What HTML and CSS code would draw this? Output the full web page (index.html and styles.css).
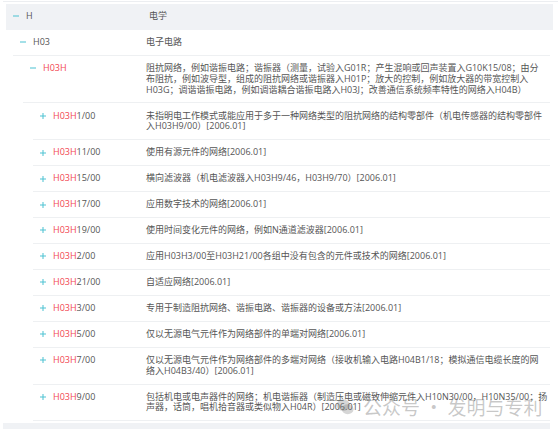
FILE: index.html
```html
<!DOCTYPE html>
<html lang="zh-CN">
<head>
<meta charset="utf-8">
<title>IPC H03H</title>
<link rel="stylesheet" href="styles.css">
</head>
<body>
<div class="tree">
  <div class="topline"></div>
  <div class="node">
    <div class="row head">
      <div class="code"><svg class="tog" viewBox="0 0 7 7"><path d="M0 3.5H7"/></svg><span>H</span></div>
      <div class="desc">电学</div>
    </div>
    <div class="children">
      <div class="node">
        <div class="row">
          <div class="code"><svg class="tog" viewBox="0 0 7 7"><path d="M0 3.5H7"/></svg><span>H03</span></div>
          <div class="desc">电子电路</div>
        </div>
        <div class="children">
          <div class="node">
            <div class="row">
              <div class="code"><svg class="tog" viewBox="0 0 7 7"><path d="M0 3.5H7"/></svg><span class="red">H03H</span></div>
              <div class="desc">阻抗网络，例如谐振电路；谐振器（测量，试验入G01R；产生混响或回声装置入G10K15/08；由分<br>布阻抗，例如波导型，组成的阻抗网络或谐振器入H01P；放大的控制，例如放大器的带宽控制入<br>H03G；调谐谐振电路，例如调谐耦合谐振电路入H03J；改善通信系统频率特性的网络入H04B）</div>
            </div>
            <div class="children">
              <div class="row">
                <div class="code"><svg class="tog" viewBox="0 0 7 7"><path d="M0 3.5H7M3.5 0V7"/></svg><span><b class="red">H03H</b>1/00</span></div>
                <div class="desc">未指明电工作模式或能应用于多于一种网络类型的阻抗网络的结构零部件（机电传感器的结构零部件<br>入H03H9/00）[2006.01]</div>
              </div>
              <div class="row">
                <div class="code"><svg class="tog" viewBox="0 0 7 7"><path d="M0 3.5H7M3.5 0V7"/></svg><span><b class="red">H03H</b>11/00</span></div>
                <div class="desc">使用有源元件的网络[2006.01]</div>
              </div>
              <div class="row">
                <div class="code"><svg class="tog" viewBox="0 0 7 7"><path d="M0 3.5H7M3.5 0V7"/></svg><span><b class="red">H03H</b>15/00</span></div>
                <div class="desc">横向滤波器（机电滤波器入H03H9/46，H03H9/70）[2006.01]</div>
              </div>
              <div class="row">
                <div class="code"><svg class="tog" viewBox="0 0 7 7"><path d="M0 3.5H7M3.5 0V7"/></svg><span><b class="red">H03H</b>17/00</span></div>
                <div class="desc">应用数字技术的网络[2006.01]</div>
              </div>
              <div class="row">
                <div class="code"><svg class="tog" viewBox="0 0 7 7"><path d="M0 3.5H7M3.5 0V7"/></svg><span><b class="red">H03H</b>19/00</span></div>
                <div class="desc">使用时间变化元件的网络，例如N通道滤波器[2006.01]</div>
              </div>
              <div class="row">
                <div class="code"><svg class="tog" viewBox="0 0 7 7"><path d="M0 3.5H7M3.5 0V7"/></svg><span><b class="red">H03H</b>2/00</span></div>
                <div class="desc">应用H03H3/00至H03H21/00各组中没有包含的元件或技术的网络[2006.01]</div>
              </div>
              <div class="row">
                <div class="code"><svg class="tog" viewBox="0 0 7 7"><path d="M0 3.5H7M3.5 0V7"/></svg><span><b class="red">H03H</b>21/00</span></div>
                <div class="desc">自适应网络[2006.01]</div>
              </div>
              <div class="row">
                <div class="code"><svg class="tog" viewBox="0 0 7 7"><path d="M0 3.5H7M3.5 0V7"/></svg><span><b class="red">H03H</b>3/00</span></div>
                <div class="desc">专用于制造阻抗网络、谐振电路、谐振器的设备或方法[2006.01]</div>
              </div>
              <div class="row">
                <div class="code"><svg class="tog" viewBox="0 0 7 7"><path d="M0 3.5H7M3.5 0V7"/></svg><span><b class="red">H03H</b>5/00</span></div>
                <div class="desc">仅以无源电气元件作为网络部件的单端对网络[2006.01]</div>
              </div>
              <div class="row">
                <div class="code"><svg class="tog" viewBox="0 0 7 7"><path d="M0 3.5H7M3.5 0V7"/></svg><span><b class="red">H03H</b>7/00</span></div>
                <div class="desc">仅以无源电气元件作为网络部件的多端对网络（接收机输入电路H04B1/18；模拟通信电缆长度的网<br>络入H04B3/40）[2006.01]</div>
              </div>
              <div class="row">
                <div class="code"><svg class="tog" viewBox="0 0 7 7"><path d="M0 3.5H7M3.5 0V7"/></svg><span><b class="red">H03H</b>9/00</span></div>
                <div class="desc">包括机电或电声器件的网络；机电谐振器（制造压电或磁致伸缩元件入H10N30/00，H10N35/00；扬<br>声器，话筒，唱机拾音器或类似物入H04R）[2006.01]</div>
              </div>
            </div>
          </div>
        </div>
      </div>
    </div>
  </div>
  <div class="next"></div>
  <div class="watermark">
    <svg class="wm-icon" viewBox="0 0 20 20"><ellipse cx="8" cy="8" rx="7.5" ry="6.5"/><ellipse cx="13" cy="12.5" rx="6.5" ry="5.5"/></svg>
    <span>公众号 · 发明与专利</span>
  </div>
</div>
</body>
</html>
```

FILE: styles.css
```css
html, body {
  margin: 0;
  padding: 0;
  background: #ffffff;
}

body {
  width: 558px;
  height: 430px;
  overflow: hidden;
  font-family: "Open Sans", "Noto Sans CJK SC", sans-serif;
  font-size: 9px;
  line-height: 10.7px;
  color: #555555;
}

.tree {
  position: relative;
  padding-top: 1px;
}

.topline {
  height: 1px;
  margin-left: 3px;
  background: #eceef1;
  margin-bottom: 2px;
}

.node,
.head {
  margin-left: 3px;
  width: 547px;
}

.children {
  margin-left: 10px;
}

.children .node {
  margin-left: 0;
  width: auto;
}

.row {
  display: flex;
  align-items: flex-start;
  padding: 7.15px 0;
  border-bottom: 1px solid #eef0f2;
}

.row.head {
  background: #f0f2f5;
  border-bottom-color: #f0f2f5;
}

.next {
  margin: 2px 0 0 3px;
  width: 547px;
  height: 6px;
  background: #f0f2f5;
}

.code {
  flex: 1;
  display: flex;
  align-items: center;
  padding-left: 7px;
  height: 10.7px;
}

.tog {
  width: 6px;
  height: 6px;
  margin-right: 7px;
  flex: none;
  fill: none;
  stroke: #4fc3d3;
  stroke-width: 1.2;
}

.code span {
  white-space: nowrap;
}

.code b {
  font-weight: normal;
}

.red {
  color: #f2474f;
}

.desc {
  width: 404px;
  box-sizing: border-box;
  padding-right: 2px;
  flex: none;
}

.watermark {
  position: absolute;
  left: 336px;
  top: 395px;
  display: flex;
  align-items: center;
  gap: 9px;
  font-family: "Noto Sans CJK SC", sans-serif;
  font-size: 19px;
  line-height: 24px;
  color: rgba(110, 110, 110, 0.38);
  white-space: nowrap;
  pointer-events: none;
}

.wm-icon {
  width: 18px;
  height: 18px;
  fill: rgba(120, 120, 120, 0.3);
  stroke: none;
}
```
